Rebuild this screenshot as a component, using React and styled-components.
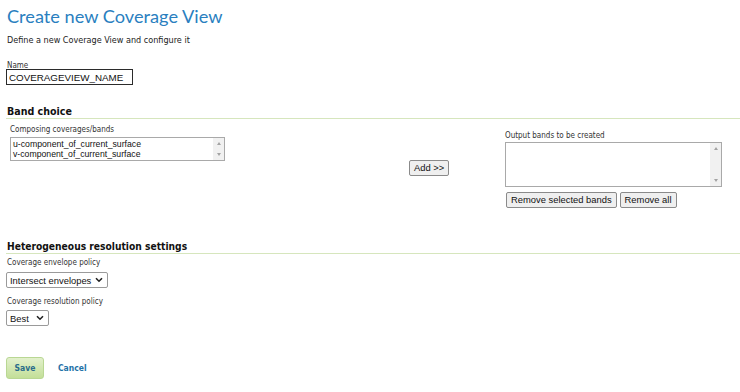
import React from "react";
import styled, { createGlobalStyle } from "styled-components";

const Global = createGlobalStyle`
  html, body { margin: 0; padding: 0; background: #fff; }
  body { font-family: "DejaVu Sans Condensed", "DejaVu Sans", sans-serif; color: #222; }
`;

const chevron =
  "data:image/svg+xml;utf8," +
  encodeURIComponent(
    '<svg xmlns="http://www.w3.org/2000/svg" width="8" height="6" viewBox="0 0 8 6"><path d="M1 1.2 L4 4.2 L7 1.2" fill="none" stroke="#222" stroke-width="1.6"/></svg>'
  );

const Page = styled.div`
  width: 740px;
  height: 392px;
  box-sizing: border-box;
  padding: 3px 0 0 7px;
  overflow: hidden;
`;

const Title = styled.h1`
  margin: 0;
  font-family: Lato, "Liberation Sans", sans-serif;
  font-weight: 400;
  font-size: 18.2px;
  line-height: 26px;
  color: #2a7fbf;
`;

const Intro = styled.p`
  margin: 5px 0 0;
  font-size: 9px;
  line-height: 12px;
  color: #222;
`;

const Label = styled.div`
  font-size: 8px;
  line-height: 10px;
  color: #333;
  margin-top: ${(p) => p.$top || 0}px;
`;

const TextInput = styled.input`
  display: block;
  box-sizing: border-box;
  width: 127px;
  height: 16px;
  margin: -2px 0 0 -1px;
  padding: 0 2px;
  border: 1px solid #2b2b2b;
  font-family: "Liberation Sans", Arial, sans-serif;
  font-size: 9.8px;
  color: #111;
  outline: none;
`;

const SectionTitle = styled.h2`
  margin: ${(p) => p.$top}px 0 0 -1px;
  padding: 0 0 0 1px;
  font-size: ${(p) => p.$size || 10.6}px;
  line-height: 13px;
  font-weight: 700;
  color: #111;
  border-bottom: 1px solid #d6e6bd;
`;

const BandGrid = styled.div`
  display: grid;
  grid-template-columns: 399px 96px 1fr;
  margin: 0 0 0 3px;
`;

const Column = styled.div`
  display: flex;
  flex-direction: column;
  align-items: flex-start;
  padding-top: ${(p) => p.$top}px;
`;

const Middle = styled.div`
  display: flex;
  align-items: center;
  padding-top: 8px;
`;

const ListBox = styled.div`
  box-sizing: border-box;
  width: ${(p) => p.$w}px;
  height: ${(p) => p.$h}px;
  margin-top: ${(p) => p.$top}px;
  border: 1px solid #a9a9a9;
  display: flex;
  background: #fff;
`;

const ListItems = styled.div`
  flex: 1;
  padding: 1px 2px;
  font-family: "Liberation Sans", Arial, sans-serif;
  font-size: 8.7px;
  line-height: 10px;
  color: #111;
`;

const ScrollBar = styled.div`
  width: 11px;
  background: #f1f1f1;
  display: flex;
  flex-direction: column;
  justify-content: space-between;
  align-items: center;
  padding: 4px 0;
`;

const Arrow = styled.span`
  width: 0;
  height: 0;
  border-left: 2.5px solid transparent;
  border-right: 2.5px solid transparent;
  ${(p) => (p.$up ? "border-bottom: 3px solid #a3a3a3;" : "border-top: 3px solid #a3a3a3;")}
`;

const Button = styled.button`
  box-sizing: border-box;
  height: 16px;
  padding: 0 4px;
  border: 1px solid #8a8a8a;
  border-radius: 2px;
  background: #efefef;
  font-family: "Liberation Sans", Arial, sans-serif;
  font-size: 9.4px;
  color: #111;
  line-height: 14px;
  white-space: nowrap;
`;

const ButtonRow = styled.div`
  display: flex;
  gap: 3px;
  margin-top: 5px;
  margin-left: 1px;
`;

const Select = styled.select`
  display: block;
  box-sizing: border-box;
  width: ${(p) => p.$w}px;
  height: 16px;
  margin-top: ${(p) => p.$top}px;
  margin-left: -1px;
  padding: 0 12px 0 3px;
  border: 1px solid #9a9a9a;
  border-radius: 2px;
  appearance: none;
  -webkit-appearance: none;
  background: #fff url("${chevron}") no-repeat right 4px center;
  font-family: "Liberation Sans", Arial, sans-serif;
  font-size: 9.4px;
  color: #111;
`;

const Actions = styled.div`
  display: flex;
  align-items: center;
  gap: 14px;
  margin-top: 31px;
  margin-left: -1px;
`;

const SaveButton = styled.button`
  box-sizing: border-box;
  width: 38px;
  height: 22px;
  border: 1px solid #b9d793;
  border-radius: 3px;
  background: linear-gradient(#e2f0cc, #c3df98);
  font-family: "DejaVu Sans Condensed", "DejaVu Sans", sans-serif;
  font-weight: 700;
  font-size: 8.5px;
  color: #2b6c8c;
  padding: 0;
`;

const CancelLink = styled.a`
  font-weight: 700;
  font-size: 8.5px;
  color: #1f72a8;
  text-decoration: none;
`;

export default function App() {
  return (
    <Page>
      <Global />
      <Title>Create new Coverage View</Title>
      <Intro>Define a new Coverage View and configure it</Intro>
      <Label $top={15}>Name</Label>
      <TextInput defaultValue="COVERAGEVIEW_NAME" />

      <SectionTitle $top={20}>Band choice</SectionTitle>
      <BandGrid>
        <Column $top={6}>
          <Label>Composing coverages/bands</Label>
          <ListBox $w={215} $h={24} $top={2}>
            <ListItems>
              <div>u-component_of_current_surface</div>
              <div>v-component_of_current_surface</div>
            </ListItems>
            <ScrollBar>
              <Arrow $up />
              <Arrow />
            </ScrollBar>
          </ListBox>
        </Column>
        <Middle>
          <Button>Add &gt;&gt;</Button>
        </Middle>
        <Column $top={12}>
          <Label>Output bands to be created</Label>
          <ListBox $w={217} $h={45} $top={1}>
            <ListItems />
            <ScrollBar>
              <Arrow $up />
              <Arrow />
            </ScrollBar>
          </ListBox>
          <ButtonRow>
            <Button>Remove selected bands</Button>
            <Button>Remove all</Button>
          </ButtonRow>
        </Column>
      </BandGrid>

      <SectionTitle $top={32} $size={10.2}>Heterogeneous resolution settings</SectionTitle>
      <Label $top={4}>Coverage envelope policy</Label>
      <Select $w={102} $top={4} defaultValue="Intersect envelopes">
        <option>Intersect envelopes</option>
        <option>Union envelopes</option>
      </Select>
      <Label $top={9}>Coverage resolution policy</Label>
      <Select $w={43} $top={3} defaultValue="Best">
        <option>Best</option>
        <option>Worst</option>
      </Select>

      <Actions>
        <SaveButton>Save</SaveButton>
        <CancelLink href="#">Cancel</CancelLink>
      </Actions>
    </Page>
  );
}
